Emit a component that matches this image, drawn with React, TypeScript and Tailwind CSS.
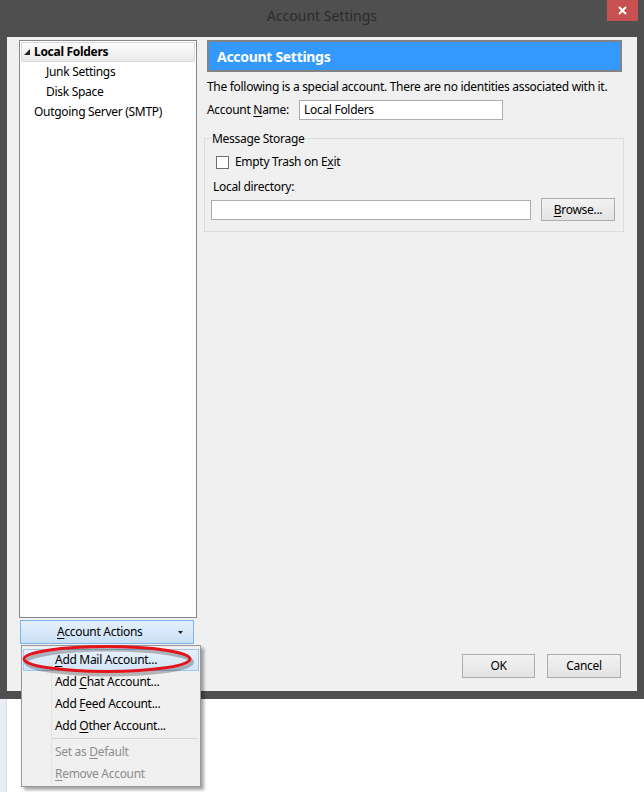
import React from 'react'

const FONT = { fontFamily: '"Noto Sans", "Open Sans", sans-serif' }

function U({ children }: { children: React.ReactNode }) {
  return <span className="underline underline-offset-2">{children}</span>
}

function TreeItem({ label, indent, selected }: { label: string; indent?: boolean; selected?: boolean }) {
  if (selected) {
    return (
      <div className="mx-[1px] flex h-[20px] items-center border border-[#d9d9d9] bg-gradient-to-b from-[#fbfbfb] to-[#ebebeb] pl-[1px]">
        <svg width="8" height="8" viewBox="0 0 8 8" className="mr-[3px]">
          <path d="M7 1 L7 7 L1 7 Z" fill="#262626" />
        </svg>
        <span className="font-bold text-black">{label}</span>
      </div>
    )
  }
  return (
    <div className={`flex h-[20px] items-center text-black ${indent ? 'pl-[26px]' : 'pl-[14px]'}`}>{label}</div>
  )
}

function Btn({ children, className }: { children: React.ReactNode; className?: string }) {
  return (
    <div
      className={`flex items-center justify-center border border-[#adadad] bg-gradient-to-b from-[#f2f2f2] to-[#e3e3e3] text-black ${className ?? ''}`}
    >
      <span>{children}</span>
    </div>
  )
}

function MenuItem({ children, disabled }: { children: React.ReactNode; disabled?: boolean }) {
  return (
    <div className={`flex h-[22px] items-center pl-[33px] ${disabled ? 'text-[#8d8d8d]' : 'text-black'}`}>
      <span>{children}</span>
    </div>
  )
}

export default function App() {
  return (
    <div
      className="relative h-[792px] w-[644px] overflow-hidden whitespace-nowrap bg-white text-[12px] tracking-[-0.3px]"
      style={FONT}
    >
      <div className="flex h-[699px] flex-col bg-[#4f4f4f]">
        {/* title bar */}
        <div className="relative flex h-[37px] shrink-0 items-start justify-center pt-[5px]">
          <span className="text-[14px] tracking-normal text-[#2b2b2b]">Account Settings</span>
          <div className="absolute right-[6px] top-0 flex h-[21px] w-[31px] items-center justify-center bg-[#c75050]">
            <svg width="9" height="9" viewBox="0 0 9 9">
              <path d="M1 1 L8 8 M8 1 L1 8" stroke="white" strokeWidth="2" />
            </svg>
          </div>
        </div>

        {/* client */}
        <div className="mx-[7px] mb-[8px] flex flex-1 bg-[#f0f0f0] pt-[3px]">
          {/* left column */}
          <div className="ml-[12px] flex w-[178px] flex-col">
            <div className="h-[578px] border border-[#828790] bg-white pt-[1px]">
              <TreeItem label="Local Folders" selected />
              <TreeItem label="Junk Settings" indent />
              <TreeItem label="Disk Space" indent />
              <TreeItem label="Outgoing Server (SMTP)" />
            </div>
            <div className="ml-[1px] mt-[2px] flex h-[24px] w-[174px] items-center border border-[#7eb4ea] bg-gradient-to-b from-[#e5f1fb] to-[#c9e0f7] text-black">
              <span className="ml-[36px]">
                <U>A</U>ccount Actions
              </span>
              <svg width="5" height="3" viewBox="0 0 5 3" className="ml-auto mr-[10px]">
                <path d="M0 0 L5 0 L2.5 3 Z" fill="#222" />
              </svg>
            </div>
          </div>

          {/* right column */}
          <div className="ml-[7px] flex flex-1 flex-col pr-[13px]">
            <div className="ml-[3px] flex h-[32px] w-[415px] items-center border-2 border-[#838383] bg-[#3399ff] pl-[8px] text-[14px] font-bold tracking-[-0.3px] text-white">
              Account Settings
            </div>
            <div className="ml-[3px] mt-[6px] text-black">
              The following is a special account. There are no identities associated with it.
            </div>
            <div className="ml-[3px] mt-[4px] flex items-center text-black">
              <span className="w-[92px]">
                Account <U>N</U>ame:
              </span>
              <div className="flex h-[20px] w-[204px] items-center border border-[#abadb3] bg-white pl-[4px]">
                Local Folders
              </div>
            </div>

            <div className="relative mt-[18px] h-[94px] w-[420px] border border-[#dcdcdc] px-[6px] pt-[14px]">
              <span className="absolute left-[6px] top-[-9px] bg-[#f0f0f0] px-[1px] text-black">Message Storage</span>
              <div className="ml-[5px] flex items-center text-black">
                <div className="mr-[6px] h-[13px] w-[13px] border border-[#707070] bg-white" />
                <span>
                  Empty Trash on E<U>x</U>it
                </span>
              </div>
              <div className="ml-[2px] mt-[7px] text-black">Local directory:</div>
              <div className="mt-[2px] flex items-center">
                <div className="h-[20px] w-[320px] border border-[#abadb3] bg-white" />
                <Btn className="ml-[10px] h-[23px] w-[74px]">
                  <U>B</U>rowse...
                </Btn>
              </div>
            </div>

            <div className="mt-auto mb-[13px] flex justify-end gap-[12px] pr-[3px]">
              <Btn className="h-[24px] w-[73px]">OK</Btn>
              <Btn className="h-[24px] w-[74px]">Cancel</Btn>
            </div>
          </div>
        </div>
      </div>

      {/* left strip below window */}
      <div className="absolute left-0 top-[699px] h-[93px] w-[7px] border-r border-[#d7dde5] bg-[#e9eef4]" />

      {/* dropdown menu */}
      <div className="absolute left-[21px] top-[645px] h-[142px] w-[180px] border border-[#979797] bg-[#f0f0f0] pt-[3px] shadow-[3px_3px_3px_rgba(0,0,0,0.35)]">
        <div className="absolute bottom-[2px] left-[29px] top-[2px] w-[1px] bg-[#e2e3e3]" />
        <div className="relative mx-[1px] flex h-[22px] items-center border border-[#99c9ef] bg-gradient-to-b from-[#e6f0fa] to-[#d2e5f7] pl-[31px] text-black">
          <span>
            <U>A</U>dd Mail Account...
          </span>
        </div>
        <MenuItem>
          Add <U>C</U>hat Account...
        </MenuItem>
        <MenuItem>
          Add <U>F</U>eed Account...
        </MenuItem>
        <MenuItem>
          Add <U>O</U>ther Account...
        </MenuItem>
        <div className="relative mb-[2px] ml-[30px] mr-[2px] mt-[1px] h-[1px] bg-[#d7d7d7]" />
        <MenuItem disabled>
          Set as <U>D</U>efault
        </MenuItem>
        <MenuItem disabled>
          <U>R</U>emove Account
        </MenuItem>
      </div>

      {/* red ellipse annotation */}
      <svg className="absolute left-[20px] top-[643px]" width="178" height="36" viewBox="0 0 178 36">
        <ellipse cx="89" cy="19" rx="83" ry="12.5" fill="none" stroke="rgba(0,0,0,0.25)" strokeWidth="4" />
        <ellipse cx="87" cy="16" rx="83" ry="12.5" fill="none" stroke="#e3141b" strokeWidth="3" />
      </svg>
    </div>
  )
}
